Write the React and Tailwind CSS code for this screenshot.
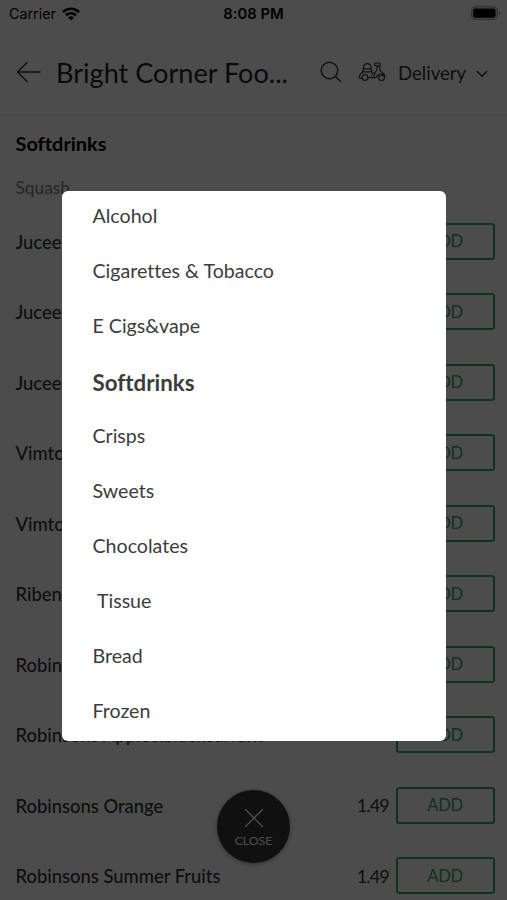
import React from 'react';

const categories = [
  'Alcohol',
  'Cigarettes & Tobacco',
  'E Cigs&vape',
  'Softdrinks',
  'Crisps',
  'Sweets',
  'Chocolates',
  ' Tissue',
  'Bread',
  'Frozen',
];

const products = [
  { name: 'Jucee', price: '1.49' },
  { name: 'Jucee', price: '1.49' },
  { name: 'Jucee', price: '1.49' },
  { name: 'Vimto', price: '1.49' },
  { name: 'Vimto', price: '1.49' },
  { name: 'Ribena', price: '1.49' },
  { name: 'Robinsons', price: '1.49' },
  { name: 'Robinsons Apple&blackcurrant', price: '' },
  { name: 'Robinsons Orange', price: '1.49' },
  { name: 'Robinsons Summer Fruits', price: '1.49' },
];

const WifiIcon = () => (
  <svg width="18" height="14" viewBox="0 0 18 14" fill="none" stroke="#000" strokeWidth="2.6">
    <path d="M1 5.1a11.4 11.4 0 0 1 16 0" />
    <path d="M3.9 8.3a7.3 7.3 0 0 1 10.2 0" />
    <path d="M9 13.6 6.1 10.6a4.2 4.2 0 0 1 5.8 0Z" fill="#000" stroke="none" />
  </svg>
);

const BatteryIcon = () => (
  <svg width="31" height="15" viewBox="0 0 31 15" fill="none">
    <rect x="1.8" y="0.8" width="25.4" height="12.6" rx="3.8" stroke="#999" strokeWidth="1.2" />
    <rect x="3.2" y="2.5" width="22.4" height="9.2" rx="2" fill="#000" />
    <path d="M28.7 5.2v4c1.6-.7 1.6-3.3 0-4Z" fill="#888" />
  </svg>
);

const ScooterIcon = () => (
  <svg width="28" height="20" viewBox="0 0 28 20" fill="none" stroke="#3a3a3a" strokeWidth="1.2" strokeLinecap="round" strokeLinejoin="round">
    <path d="M5 9.8 5.3 6C5.6 3.2 7.2 1.6 9.3 1.6s3.6 1.6 4 4.4l.4 3.8" />
    <path d="M5.2 6.9h8.3" />
    <path d="M4.6 9.9h9.2c1.2 0 1.5 1 .9 1.8l-1 1.6" />
    <path d="M4.6 9.9C2.9 11.2 1.4 13 1 15.2c0 .6.3.9 2.7.9" />
    <circle cx="7" cy="15.5" r="2.9" />
    <path d="M9.9 15.7h6.8c1.4 0 2.4-.6 3.2-1.7" />
    <path d="M22 1h-4.3c-1.6.2-1.6 2.500 0 2.800H22Z" />
    <path d="M19.2 4c.5 2.6-.3 4.5-1.7 6.4-1 1.5-1.5 3-1.8 5" />
    <path d="M21.8 4c-.4 3 .4 5.2 2.4 6.5 1.7 1 2.6 2 2.7 3.7" />
    <path d="M19 14.4c.7-2 3-3.1 5.2-2.4l2.7 2.2" />
    <circle cx="23.6" cy="15.7" r="2.8" />
  </svg>
);

const StatusBar = () => (
  <div className="grid h-7 grid-cols-3 items-center pl-[9px] pr-[7px] font-['Inter','Liberation_Sans',sans-serif] text-[14.3px] text-black">
    <div className="flex items-center gap-1.5">
      <span>Carrier</span>
      <WifiIcon />
    </div>
    <span className="-ml-0.5 text-center text-[14.8px] font-semibold">8:08 PM</span>
    <div className="-mr-px mb-0.5 flex justify-end">
      <BatteryIcon />
    </div>
  </div>
);

const Header = () => (
  <header className="flex h-[86px] items-center pl-4 pt-[3px] shadow-[0_2px_2px_rgba(0,0,0,0.07)]">
    <svg className="-mt-0.5 shrink-0" width="26" height="22" viewBox="0 0 26 22" fill="none" stroke="#333" strokeWidth="1.3" strokeLinecap="round" strokeLinejoin="round">
      <path d="M24 11H1.5M11 1.5 1.5 11l9.500 9.500" />
    </svg>
    <h1 className="ml-3.5 w-[233px] whitespace-nowrap text-[27.1px] leading-8 text-[#222]">Bright Corner Foo...</h1>
    <svg className="-mt-0.5 ml-[31px] shrink-0" width="22" height="22" viewBox="0 0 22 22" fill="none" stroke="#333" strokeWidth="1.4" strokeLinecap="round">
      <circle cx="9.5" cy="9.5" r="8.3" />
      <path d="m15.5 15.5 5 5" />
    </svg>
    <div className="ml-4 flex items-center">
      <ScooterIcon />
      <span className="ml-3 pt-0.5 text-[18.6px]">Delivery</span>
      <svg className="ml-2.5 mt-1" width="12" height="8" viewBox="0 0 13 9" fill="none" stroke="#333" strokeWidth="1.5" strokeLinecap="round" strokeLinejoin="round">
        <path d="m1 1.5 5.5 5.5L12 1.5" />
      </svg>
    </div>
  </header>
);

const ProductRow = ({ name, price }) => (
  <li className="flex h-[70.5px] items-center">
    <span className="flex-1 whitespace-nowrap pt-0.5 text-[18.4px] font-medium text-[#333]">{name}</span>
    <span className="mr-[7px] pt-px text-[18px] tracking-[-0.8px] text-[#333]">{price}</span>
    <button className="h-[37px] w-[99px] rounded-[3px] border-2 border-[#34a468] pr-px pt-px text-[16.6px] tracking-[-0.3px] text-[#34a468]">ADD</button>
  </li>
);

const CategoryMenu = () => (
  <nav className="absolute left-[62px] top-[191px] w-96 rounded-md bg-white">
    <ul>
      {categories.map(category => (
        <li
          key={category}
          className={`flex h-[55px] items-center whitespace-pre pl-[30.5px] text-[#3c3c3c] ${
            category === 'Softdrinks' ? 'pb-px text-[22.3px] font-bold' : 'pb-1.5 text-[19.6px]'
          }`}
        >
          {category}
        </li>
      ))}
    </ul>
  </nav>
);

export default function App() {
  return (
    <div className="relative h-[900px] w-full overflow-hidden bg-white font-['Lato',sans-serif] text-[#333] [font-variant-ligatures:none]">
      <StatusBar />
      <Header />
      <main className="pl-[15.5px] pr-3">
        <h2 className="pt-4 text-[19.9px] font-bold leading-[26px] text-black">Softdrinks</h2>
        <h3 className="mt-5 text-[17.3px] font-medium leading-6 text-[#888]">Squash</h3>
        <ul className="mt-[6.2px]">
          {products.map((product, i) => (
            <ProductRow key={i} {...product} />
          ))}
        </ul>
      </main>
      <div className="absolute left-[217px] top-[790px] flex size-[73px] flex-col items-center rounded-full bg-[#383838] pt-[18px] text-white shadow-[0_1px_5px_rgba(0,0,0,0.4)]">
        <svg width="20" height="20" viewBox="0 0 20 20" stroke="currentColor" strokeWidth="1.3" strokeLinecap="round">
          <path d="m1.5 1.5 17 17m0-17-17 17" />
        </svg>
        <span className="mt-1 text-[12.3px] leading-[18px]">CLOSE</span>
      </div>
      <div className="absolute inset-0 bg-black/70" />
      <CategoryMenu />
    </div>
  );
}
